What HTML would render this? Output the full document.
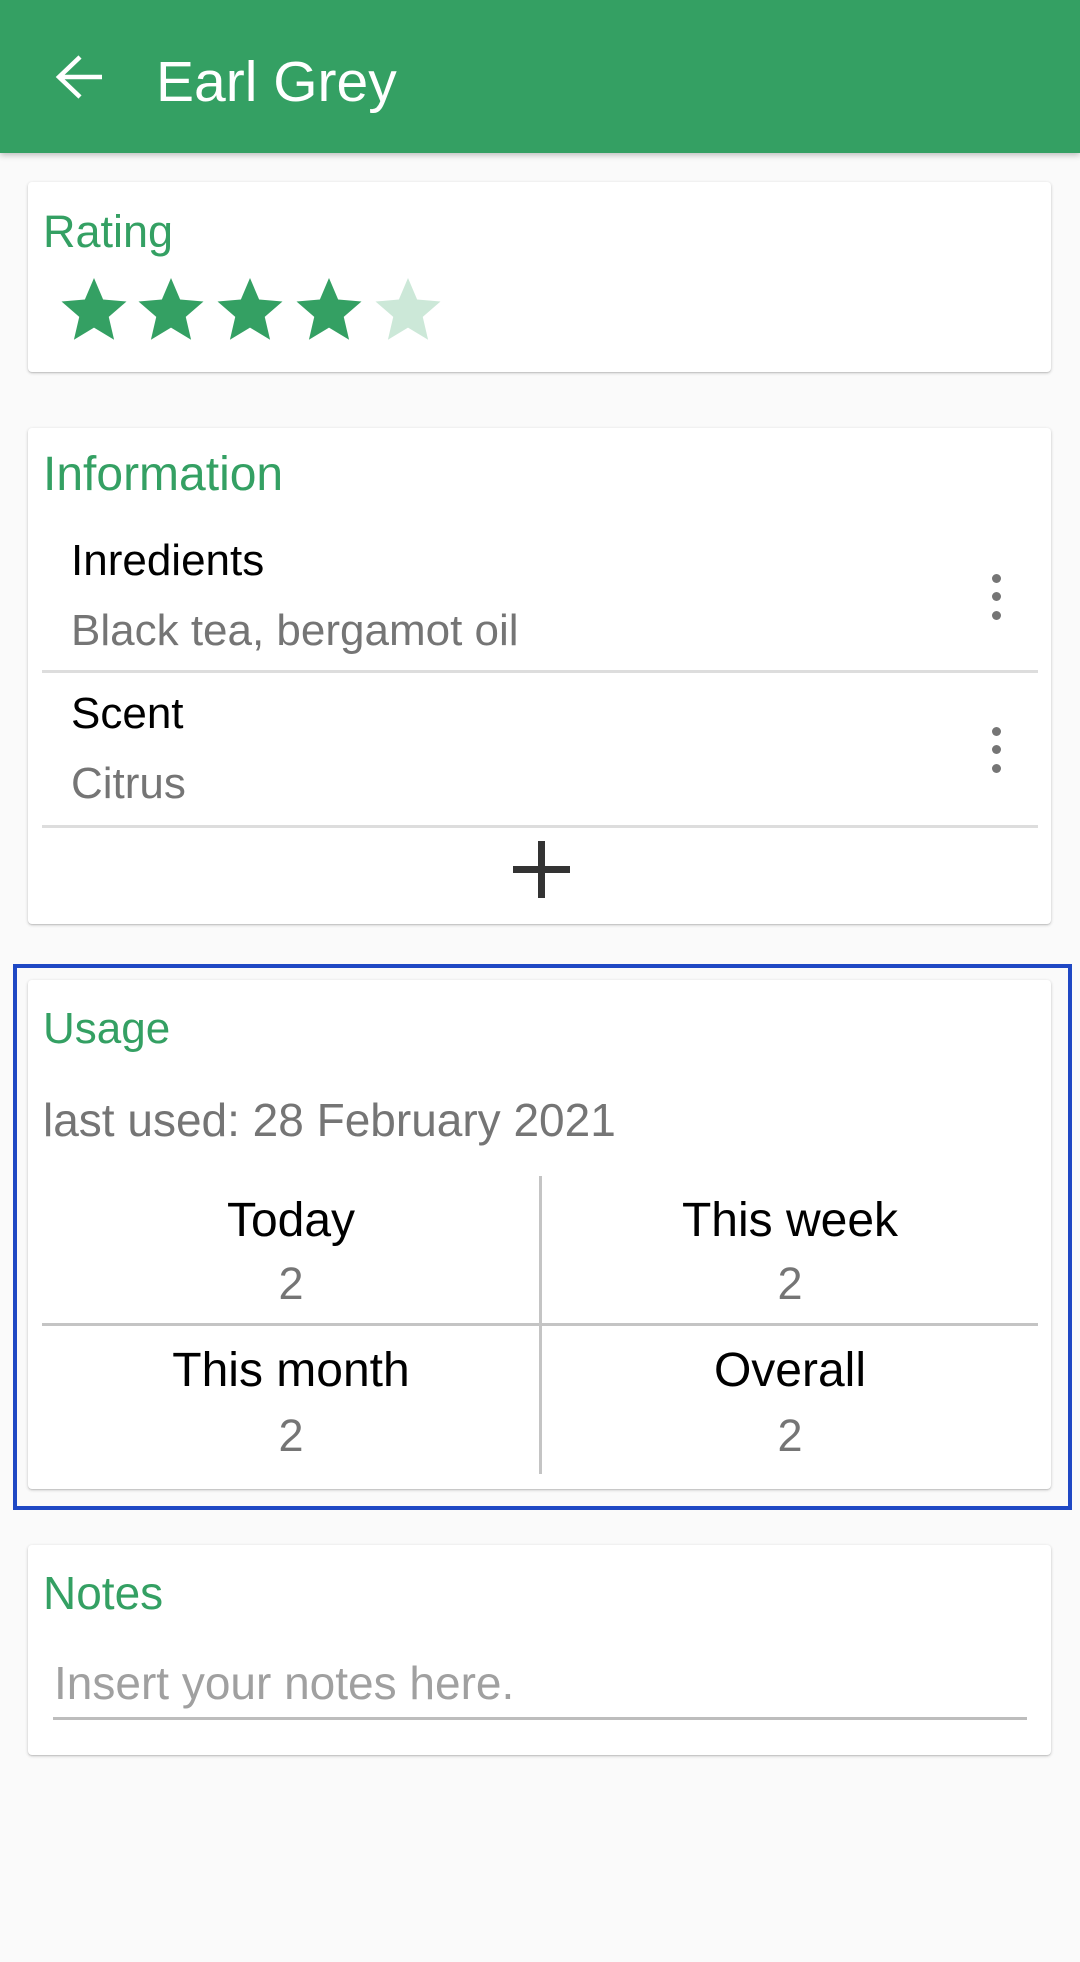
<!DOCTYPE html>
<html><head><meta charset="utf-8"><style>
*{margin:0;padding:0;box-sizing:border-box}
body{width:1080px;height:1962px;background:#fafafa;position:relative;overflow:hidden;font-family:"Liberation Sans",Roboto,sans-serif}
.t{position:absolute;line-height:1;white-space:nowrap}
.bar{position:absolute;left:0;top:0;width:1080px;height:153px;background:#34a063;box-shadow:0 2px 6px rgba(0,0,0,.25)}
.card{position:absolute;left:28px;width:1023px;background:#fff;border-radius:4px;box-shadow:0 1px 3px rgba(0,0,0,.2),0 1px 1px rgba(0,0,0,.1)}
.g{color:#34a063}
.k{color:#000}
.s{color:#757575}
.hl{position:absolute;background:#ddd}
.dot{position:absolute;width:9px;height:9px;border-radius:50%;background:#757575}
.c{text-align:center;width:496px}
</style></head><body>
<div class="bar"></div>
<svg style="position:absolute;left:54px;top:54px" width="50" height="46" viewBox="0 0 50 46"><path d="M48 23H6M26 3L5 23l21 20" fill="none" stroke="#fff" stroke-width="4.5"/></svg>
<div class="t" style="left:156px;top:54px;font-size:57px;color:#fff">Earl Grey</div>

<div class="card" style="top:182px;height:190px"></div>
<div class="t g" style="left:43px;top:209px;font-size:45px">Rating</div>
<svg style="position:absolute;left:0;top:271px" width="520" height="80">
<defs><path id="st" d="M12 17.27L18.18 21l-1.64-7.03L22 9.24l-7.19-.61L12 2 9.19 8.63 2 9.24l5.46 4.73L5.82 21z"/></defs>
<g fill="#34a063">
<use href="#st" transform="translate(55 0.5) scale(3.25)"/>
<use href="#st" transform="translate(132 0.5) scale(3.25)"/>
<use href="#st" transform="translate(211 0.5) scale(3.25)"/>
<use href="#st" transform="translate(290 0.5) scale(3.25)"/>
</g>
<use href="#st" fill="#cce8d8" transform="translate(369 0.5) scale(3.25)"/>
</svg>

<div class="card" style="top:428px;height:496px"></div>
<div class="t g" style="left:43px;top:451px;font-size:48px">Information</div>
<div class="t k" style="left:71px;top:539px;font-size:44px">Inredients</div>
<div class="t s" style="left:71px;top:609px;font-size:44px">Black tea, bergamot oil</div>
<div class="dot" style="left:992px;top:574px"></div><div class="dot" style="left:992px;top:592px"></div><div class="dot" style="left:992px;top:611px"></div>
<div class="hl" style="left:42px;top:670px;width:996px;height:3px"></div>
<div class="t k" style="left:71px;top:692px;font-size:44px">Scent</div>
<div class="t s" style="left:71px;top:762px;font-size:44px">Citrus</div>
<div class="dot" style="left:992px;top:727px"></div><div class="dot" style="left:992px;top:745px"></div><div class="dot" style="left:992px;top:764px"></div>
<div class="hl" style="left:42px;top:825px;width:996px;height:3px"></div>
<div style="position:absolute;left:513px;top:866px;width:57px;height:7px;background:#333"></div>
<div style="position:absolute;left:538px;top:841px;width:7px;height:57px;background:#333"></div>

<div style="position:absolute;left:13px;top:964px;width:1059px;height:546px;border:4px solid #1f48c4"></div>
<div class="card" style="top:980px;height:509px"></div>
<div class="t g" style="left:43px;top:1007px;font-size:44px">Usage</div>
<div class="t s" style="left:43px;top:1097px;font-size:46px">last used: 28 February 2021</div>
<div style="position:absolute;left:539px;top:1176px;width:3px;height:298px;background:#c4c4c4"></div>
<div style="position:absolute;left:42px;top:1323px;width:996px;height:3px;background:#c4c4c4"></div>
<div class="t k c" style="left:43px;top:1197px;font-size:48px">Today</div>
<div class="t s c" style="left:43px;top:1261px;font-size:45px">2</div>
<div class="t k c" style="left:542px;top:1197px;font-size:48px">This week</div>
<div class="t s c" style="left:542px;top:1261px;font-size:45px">2</div>
<div class="t k c" style="left:43px;top:1347px;font-size:48px">This month</div>
<div class="t s c" style="left:43px;top:1413px;font-size:45px">2</div>
<div class="t k c" style="left:542px;top:1347px;font-size:48px">Overall</div>
<div class="t s c" style="left:542px;top:1413px;font-size:45px">2</div>

<div class="card" style="top:1545px;height:210px"></div>
<div class="t g" style="left:43px;top:1570px;font-size:46px">Notes</div>
<div class="t" style="left:54px;top:1660px;font-size:46px;color:#a0a0a0">Insert your notes here.</div>
<div style="position:absolute;left:53px;top:1717px;width:974px;height:3px;background:#bdbdbd"></div>
</body></html>
